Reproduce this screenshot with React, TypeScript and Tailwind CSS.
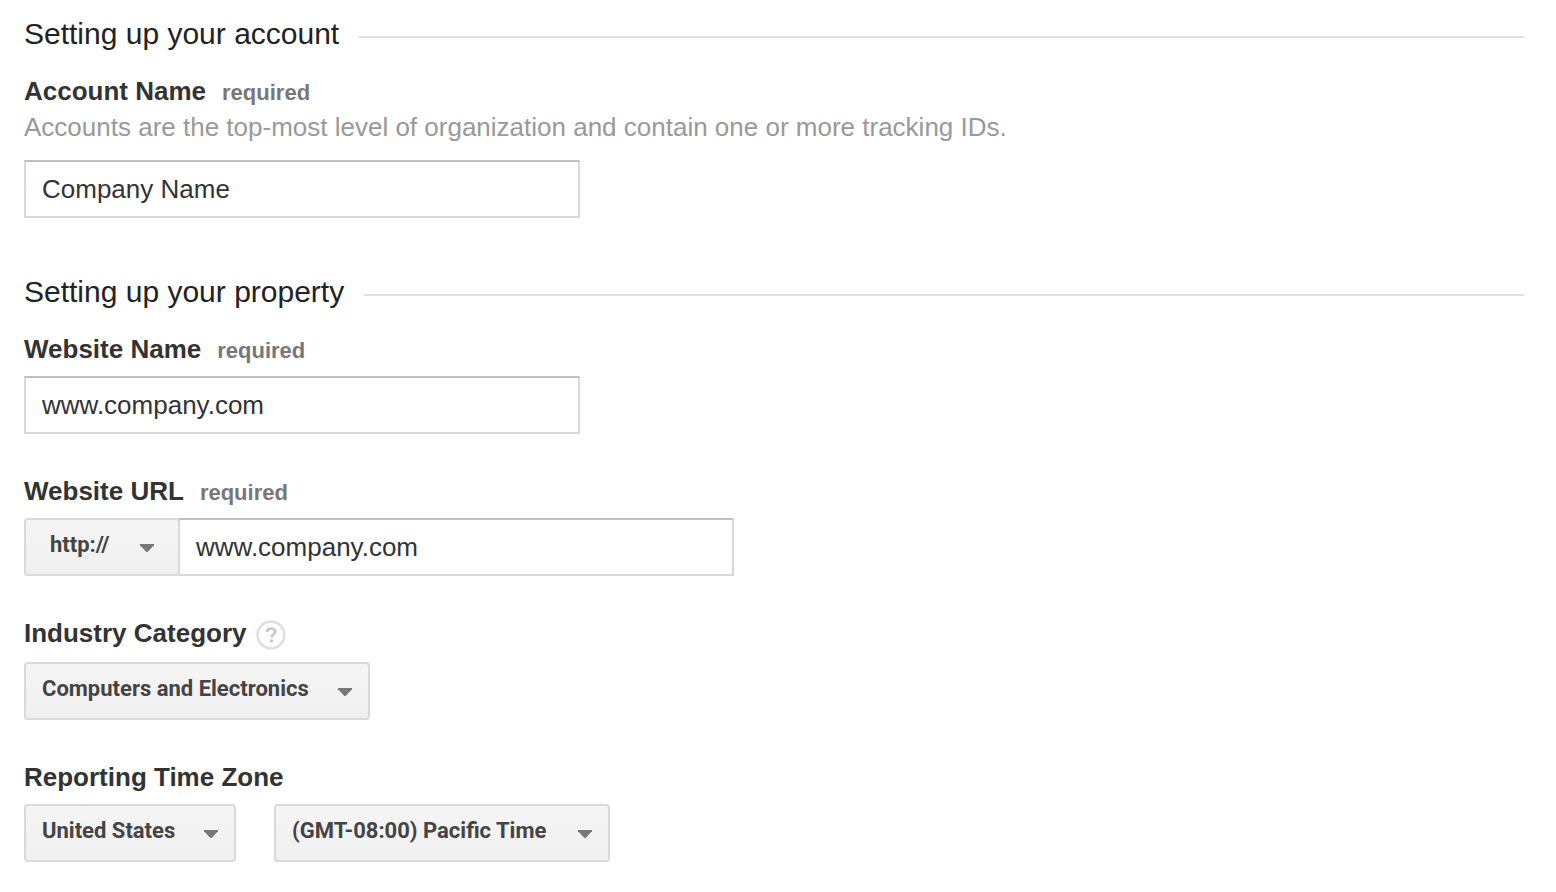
import { useState } from 'react';
import type { ReactNode } from 'react';

function SectionHeading({ children }: { children: ReactNode }) {
  return (
    <div className="flex items-center gap-5">
      <h2 className="text-[30px] leading-9 text-[#222222]">{children}</h2>
      <div className="mt-1.5 h-0.5 flex-1 bg-[#e0e0e0]" />
    </div>
  );
}

function FieldLabel({ id, required, children }: { id: string; required?: boolean; children: ReactNode }) {
  return (
    <div className="flex h-[37px] items-baseline gap-4 leading-[38px]">
      <label htmlFor={id} className="text-[26px] font-bold text-[#333333]">
        {children}
      </label>
      {required && <span className="text-[22px] font-bold text-[#777777]">required</span>}
    </div>
  );
}

function TextField({ id, initial, className = '' }: { id: string; initial: string; className?: string }) {
  const [value, setValue] = useState(initial);
  return (
    <input
      id={id}
      type="text"
      value={value}
      onChange={(e) => setValue(e.target.value)}
      className={`block h-[58px] w-full max-w-[556px] border-2 border-[#d9d9d9] border-t-[#c0c0c0] bg-white px-4 text-[26px] text-[#333333] outline-none ${className}`}
    />
  );
}

type DropdownProps = { id: string; label?: string; options: string[]; className: string; inset?: boolean };

function Dropdown({ id, label, options, className, inset }: DropdownProps) {
  return (
    <div className={`relative ${className}`}>
      <select
        id={id}
        aria-label={label}
        className={`block h-[58px] w-full appearance-none rounded-[4px] border-2 border-[#d9d9d9] bg-linear-to-b from-[#f5f5f5] to-[#f0f0f0] pr-10 pb-1.5 font-[Roboto,sans-serif] text-[22px] font-bold text-[#444444] outline-none ${inset ? 'pl-6' : 'pl-4'}`}
      >
        {options.map((option) => (
          <option key={option}>{option}</option>
        ))}
      </select>
      <svg
        viewBox="0 0 14 8"
        className={`pointer-events-none absolute top-[26px] h-2 w-3.5 ${inset ? 'right-[26px]' : 'right-[18px]'}`}
        aria-hidden="true"
      >
        <path d="M0 0H14V1.2L7.6 8H6.4L0 1.2Z" fill="#777777" />
      </svg>
    </div>
  );
}

function HelpButton() {
  return (
    <button type="button" aria-label="About industry categories" className="mt-1.5 size-[30px]">
      <svg viewBox="0 0 30 30" className="size-full" fill="none" aria-hidden="true">
        <circle cx="15" cy="15" r="13.4" stroke="#eeeeee" strokeWidth="3.2" />
        <circle cx="15" cy="15" r="13.4" stroke="#dedede" strokeWidth="1.8" />
        <path
          d="M11.2 12C11.2 9.6 12.8 8.6 15.2 8.6C17.6 8.6 19.2 9.8 19.2 11.8C19.2 14.4 15.5 14.3 15.5 17.6"
          stroke="#c8c8c8"
          strokeWidth="2.8"
        />
        <circle cx="15.4" cy="21" r="1.8" fill="#c8c8c8" />
      </svg>
    </button>
  );
}

export default function App() {
  return (
    <form className="px-6 pt-4 pr-8 pb-7 font-['Liberation_Sans',Arial,sans-serif]">
      <section>
        <SectionHeading>Setting up your account</SectionHeading>
        <div className="mt-5">
          <FieldLabel id="account" required>Account Name</FieldLabel>
          <p className="mb-[15px] text-[26px] leading-9 text-[#999999]">
            Accounts are the top-most level of organization and contain one or more tracking IDs.
          </p>
          <TextField id="account" initial="Company Name" />
        </div>
      </section>

      <section className="mt-14">
        <SectionHeading>Setting up your property</SectionHeading>
        <div className="mt-5 flex flex-col gap-[38px]">
          <div className="flex flex-col gap-[9px]">
            <FieldLabel id="website" required>Website Name</FieldLabel>
            <TextField id="website" initial="www.company.com" />
          </div>
          <div className="flex flex-col gap-[9px]">
            <FieldLabel id="url" required>Website URL</FieldLabel>
            <div className="flex">
              <Dropdown id="protocol" label="Protocol" options={['http://', 'https://']} className="w-[156px] shrink-0" inset />
              <TextField id="url" initial="www.company.com" className="relative -ml-0.5" />
            </div>
          </div>
          <div className="flex flex-col gap-[11px]">
            <div className="flex h-[37px] gap-[9px]">
              <FieldLabel id="industry">Industry Category</FieldLabel>
              <HelpButton />
            </div>
            <Dropdown id="industry" options={['Computers and Electronics']} className="w-full max-w-[346px]" />
          </div>
          <div className="flex flex-col gap-[9px]">
            <FieldLabel id="country">Reporting Time Zone</FieldLabel>
            <div className="flex flex-wrap gap-x-[38px] gap-y-4">
              <Dropdown id="country" options={['United States']} className="w-[212px]" />
              <Dropdown id="zone" label="Time zone" options={['(GMT-08:00) Pacific Time']} className="w-[336px]" />
            </div>
          </div>
        </div>
      </section>
    </form>
  );
}
